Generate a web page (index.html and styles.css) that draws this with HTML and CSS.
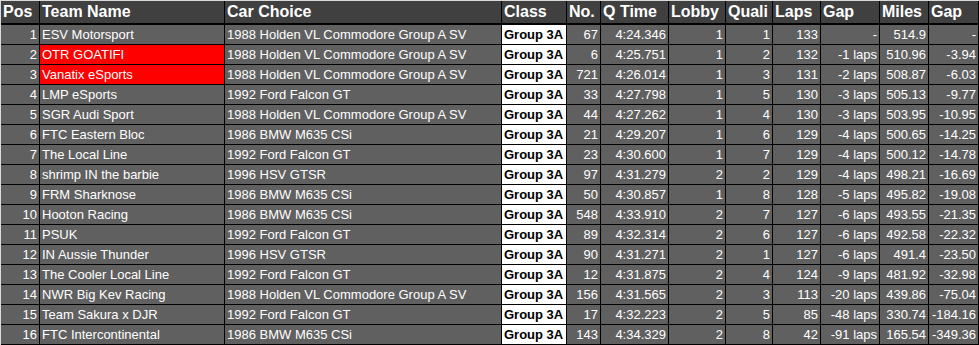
FILE: index.html
```html
<!DOCTYPE html>
<html>
<head>
<meta charset="utf-8">
<link rel="stylesheet" href="styles.css">
</head>
<body>
<table class="results">
<colgroup>
<col class="c-pos"><col class="c-team"><col class="c-car"><col class="c-class"><col class="c-no"><col class="c-qtime"><col class="c-lobby"><col class="c-quali"><col class="c-laps"><col class="c-gap"><col class="c-miles"><col class="c-gap2">
</colgroup>
<thead>
<tr><th>Pos</th><th>Team Name</th><th>Car Choice</th><th>Class</th><th>No.</th><th>Q Time</th><th>Lobby</th><th>Quali</th><th>Laps</th><th>Gap</th><th>Miles</th><th>Gap</th></tr>
</thead>
<tbody>
<tr><td class="num">1</td><td>ESV Motorsport</td><td>1988 Holden VL Commodore Group A SV</td><td class="cls">Group 3A</td><td class="num">67</td><td class="num">4:24.346</td><td class="num">1</td><td class="num">1</td><td class="num">133</td><td class="num">-</td><td class="num">514.9</td><td class="num">-</td></tr>
<tr><td class="num">2</td><td class="red">OTR GOATIFI</td><td>1988 Holden VL Commodore Group A SV</td><td class="cls">Group 3A</td><td class="num">6</td><td class="num">4:25.751</td><td class="num">1</td><td class="num">2</td><td class="num">132</td><td class="num">-1 laps</td><td class="num">510.96</td><td class="num">-3.94</td></tr>
<tr><td class="num">3</td><td class="red">Vanatix eSports</td><td>1988 Holden VL Commodore Group A SV</td><td class="cls">Group 3A</td><td class="num">721</td><td class="num">4:26.014</td><td class="num">1</td><td class="num">3</td><td class="num">131</td><td class="num">-2 laps</td><td class="num">508.87</td><td class="num">-6.03</td></tr>
<tr><td class="num">4</td><td>LMP eSports</td><td>1992 Ford Falcon GT</td><td class="cls">Group 3A</td><td class="num">33</td><td class="num">4:27.798</td><td class="num">1</td><td class="num">5</td><td class="num">130</td><td class="num">-3 laps</td><td class="num">505.13</td><td class="num">-9.77</td></tr>
<tr><td class="num">5</td><td>SGR Audi Sport</td><td>1988 Holden VL Commodore Group A SV</td><td class="cls">Group 3A</td><td class="num">44</td><td class="num">4:27.262</td><td class="num">1</td><td class="num">4</td><td class="num">130</td><td class="num">-3 laps</td><td class="num">503.95</td><td class="num">-10.95</td></tr>
<tr><td class="num">6</td><td>FTC Eastern Bloc</td><td>1986 BMW M635 CSi</td><td class="cls">Group 3A</td><td class="num">21</td><td class="num">4:29.207</td><td class="num">1</td><td class="num">6</td><td class="num">129</td><td class="num">-4 laps</td><td class="num">500.65</td><td class="num">-14.25</td></tr>
<tr><td class="num">7</td><td>The Local Line</td><td>1992 Ford Falcon GT</td><td class="cls">Group 3A</td><td class="num">23</td><td class="num">4:30.600</td><td class="num">1</td><td class="num">7</td><td class="num">129</td><td class="num">-4 laps</td><td class="num">500.12</td><td class="num">-14.78</td></tr>
<tr><td class="num">8</td><td>shrimp IN the barbie</td><td>1996 HSV GTSR</td><td class="cls">Group 3A</td><td class="num">97</td><td class="num">4:31.279</td><td class="num">2</td><td class="num">2</td><td class="num">129</td><td class="num">-4 laps</td><td class="num">498.21</td><td class="num">-16.69</td></tr>
<tr><td class="num">9</td><td>FRM Sharknose</td><td>1986 BMW M635 CSi</td><td class="cls">Group 3A</td><td class="num">50</td><td class="num">4:30.857</td><td class="num">1</td><td class="num">8</td><td class="num">128</td><td class="num">-5 laps</td><td class="num">495.82</td><td class="num">-19.08</td></tr>
<tr><td class="num">10</td><td>Hooton Racing</td><td>1986 BMW M635 CSi</td><td class="cls">Group 3A</td><td class="num">548</td><td class="num">4:33.910</td><td class="num">2</td><td class="num">7</td><td class="num">127</td><td class="num">-6 laps</td><td class="num">493.55</td><td class="num">-21.35</td></tr>
<tr><td class="num">11</td><td>PSUK</td><td>1992 Ford Falcon GT</td><td class="cls">Group 3A</td><td class="num">89</td><td class="num">4:32.314</td><td class="num">2</td><td class="num">6</td><td class="num">127</td><td class="num">-6 laps</td><td class="num">492.58</td><td class="num">-22.32</td></tr>
<tr><td class="num">12</td><td>IN Aussie Thunder</td><td>1996 HSV GTSR</td><td class="cls">Group 3A</td><td class="num">90</td><td class="num">4:31.271</td><td class="num">2</td><td class="num">1</td><td class="num">127</td><td class="num">-6 laps</td><td class="num">491.4</td><td class="num">-23.50</td></tr>
<tr><td class="num">13</td><td>The Cooler Local Line</td><td>1992 Ford Falcon GT</td><td class="cls">Group 3A</td><td class="num">12</td><td class="num">4:31.875</td><td class="num">2</td><td class="num">4</td><td class="num">124</td><td class="num">-9 laps</td><td class="num">481.92</td><td class="num">-32.98</td></tr>
<tr><td class="num">14</td><td>NWR Big Kev Racing</td><td>1988 Holden VL Commodore Group A SV</td><td class="cls">Group 3A</td><td class="num">156</td><td class="num">4:31.565</td><td class="num">2</td><td class="num">3</td><td class="num">113</td><td class="num">-20 laps</td><td class="num">439.86</td><td class="num">-75.04</td></tr>
<tr><td class="num">15</td><td>Team Sakura x DJR</td><td>1992 Ford Falcon GT</td><td class="cls">Group 3A</td><td class="num">17</td><td class="num">4:32.223</td><td class="num">2</td><td class="num">5</td><td class="num">85</td><td class="num">-48 laps</td><td class="num">330.74</td><td class="num">-184.16</td></tr>
<tr><td class="num">16</td><td>FTC Intercontinental</td><td>1986 BMW M635 CSi</td><td class="cls">Group 3A</td><td class="num">143</td><td class="num">4:34.329</td><td class="num">2</td><td class="num">8</td><td class="num">42</td><td class="num">-91 laps</td><td class="num">165.54</td><td class="num">-349.36</td></tr>
</tbody>
</table>
</body>
</html>
```
FILE: styles.css
```css
html, body {
  margin: 0;
  padding: 0;
  background: #d9d9d9;
}

.results {
  table-layout: fixed;
  width: 978px;
  margin: 1px 0 0 1px;
  border-collapse: separate;
  border-spacing: 0;
  font-family: "Liberation Sans", Arial, sans-serif;
  color: #ffffff;
}

.c-pos { width: 39px; }
.c-team { width: 185px; }
.c-car { width: 277px; }
.c-class { width: 65px; }
.c-no { width: 34px; }
.c-qtime { width: 68px; }
.c-lobby { width: 57px; }
.c-quali { width: 47px; }
.c-laps { width: 48px; }
.c-gap { width: 59px; }
.c-miles { width: 49px; }
.c-gap2 { width: 50px; }

.results th,
.results td {
  box-sizing: border-box;
  border-right: 1px solid #000;
  border-bottom: 1px solid #000;
  white-space: nowrap;
  overflow: hidden;
  padding: 0 2px;
}

.results th {
  height: 24px;
  background: #404040;
  border-bottom-width: 2px;
  font-size: 16px;
  font-weight: bold;
  text-align: left;
  vertical-align: middle;
  line-height: 22px;
}

.results td {
  height: 20px;
  background: #606060;
  font-size: 13px;
  line-height: 19px;
  text-align: left;
}

.results td.num {
  text-align: right;
  padding-right: 2px;
}

.results td.red {
  background: #ff0000;
}

.results td.cls {
  background: #ffffff;
  color: #000000;
  font-weight: bold;
}
```
